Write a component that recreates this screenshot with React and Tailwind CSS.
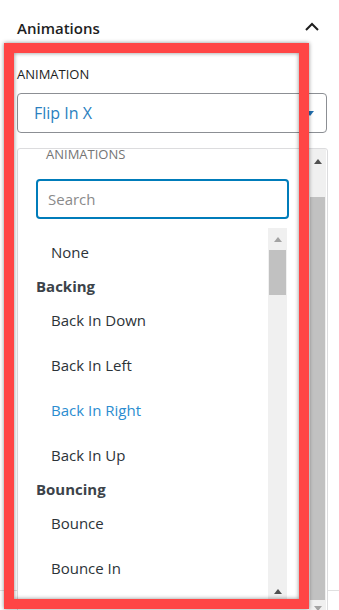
import React from "react";

const groups = [
  { items: ["None"] },
  { title: "Backing", items: ["Back In Down", "Back In Left", "Back In Right", "Back In Up"] },
  { title: "Bouncing", items: ["Bounce", "Bounce In"] },
];

const Arrow = ({ dir = "up", color = "#505050" }) => (
  <svg width="8" height="5" viewBox="0 0 8 5">
    {dir === "up" ? (
      <polygon points="0,5 8,5 4,0" fill={color} />
    ) : (
      <polygon points="0,0 8,0 4,5" fill={color} />
    )}
  </svg>
);

const App = () => {
  return (
    <div
      className="relative w-[339px] h-[610px] overflow-hidden bg-white text-[#1e1e1e]"
      style={{ fontFamily: '"Open Sans", "Noto Sans", sans-serif' }}
    >
      {/* panel body */}
      <div className="h-[591px] border-b border-[#e0e0e0]">
        <div className="flex items-center justify-between pl-[17px] pr-[20px] pt-[15px] h-[42px]">
          <span className="text-[15px] font-semibold leading-none">Animations</span>
          <svg width="14" height="9" viewBox="0 0 14 9" className="-mt-[5px]">
            <polyline points="1,8 7,2 13,8" fill="none" stroke="#1e1e1e" strokeWidth="2" />
          </svg>
        </div>
        <div className="px-[17px] pt-[22px]">
          <div className="text-[13px] leading-[20px] uppercase">Animation</div>
          <div className="mt-[9px] h-[40px] w-[310px] rounded-[4px] border border-[#8c8f94] flex items-center justify-between pl-[16px] pr-[12px]">
            <span className="text-[16px] text-[#2b7fc0]">Flip In X</span>
            <Arrow dir="down" color="#2271b1" />
          </div>
        </div>
      </div>

      {/* dropdown menu */}
      <div className="absolute left-[17px] top-[148px] w-[311px] h-[480px] flex border border-[#dcdcde] rounded-t-[3px] bg-white">
        <div className="flex-1 overflow-hidden">
          <div className="-mt-[5px] pl-[28px] text-[13px] leading-[20px] uppercase text-[#757575]">Animations</div>
          <div className="mt-[15px] ml-[18px] w-[253px] h-[40px] rounded-[4px] border-2 border-[#007cba] flex items-center pl-[10px] text-[15px] text-[#8a8a8a]">
            Search
          </div>
          <div className="mt-[9px] ml-[18px] w-[251px] h-[380px] flex">
            <div className="flex-1 pt-[2px] overflow-hidden">
              {groups.map((g, i) => (
                <div key={i}>
                  {g.title && (
                    <div className="h-[23px] flex items-center text-[15px] font-bold text-[#3c434a]">{g.title}</div>
                  )}
                  {g.items.map((it) => (
                    <div
                      key={it}
                      className={
                        "h-[45px] flex items-center pl-[15px] text-[15px] " +
                        (it === "Back In Right" ? "text-[#2b8dd0]" : "text-[#2c3338]")
                      }
                    >
                      {it}
                    </div>
                  ))}
                </div>
              ))}
            </div>
            <div className="w-[19px] h-[372px] bg-[#f0f0f0] flex flex-col items-center">
              <div className="h-[22px] flex items-center justify-center">
                <Arrow color="#a3a3a3" />
              </div>
              <div className="w-[17px] h-[45px] bg-[#c1c1c1]" />
              <div className="flex-1" />
              <div className="h-[18px] flex items-center justify-center">
                <Arrow />
              </div>
            </div>
          </div>
        </div>
        <div className="w-[17px] mr-[1px] bg-[#f0f0f0] flex flex-col items-center">
          <div className="h-[24px] flex items-center justify-center">
            <Arrow />
          </div>
          <div className="w-[15px] h-[24px]" />
          <div className="w-[15px] h-[403px] bg-[#c1c1c1]" />
          <div className="h-[17px] flex items-center justify-center">
            <Arrow color="#a3a3a3" dir="down" />
          </div>
        </div>
      </div>

      {/* highlight box */}
      <div className="absolute left-[4px] top-[43px] w-[305px] h-[566px] border-[10px] border-[#ff4545] shadow-[0_0_4px_rgba(0,0,0,0.45),inset_0_0_4px_rgba(0,0,0,0.45)]" />
    </div>
  );
};

export default App;
